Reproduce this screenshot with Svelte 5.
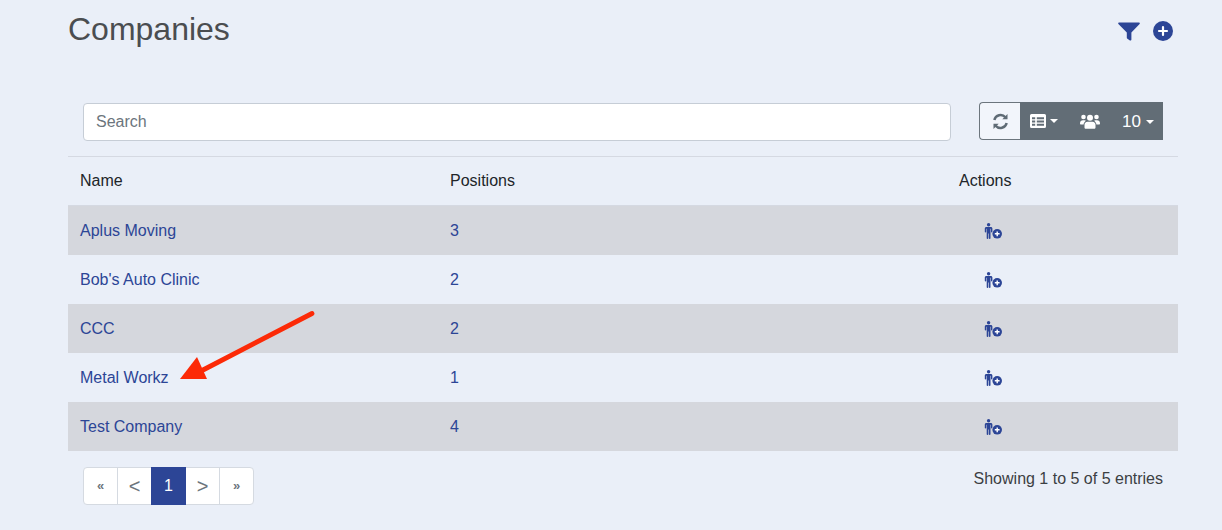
<script>
  const companies = [
    { name: "Aplus Moving", positions: 3 },
    { name: "Bob's Auto Clinic", positions: 2 },
    { name: "CCC", positions: 2 },
    { name: "Metal Workz", positions: 1 },
    { name: "Test Company", positions: 4 }
  ];
</script>

<main class="page">
  <header class="top">
    <h1>Companies</h1>
    <div class="top-icons">
      <svg class="filter" viewBox="0 0 22 19" width="22" height="19">
        <path d="M1 0.500h20c.8 0 1.100.9.600 1.500L13.400 10.500v7c0 .8-.8 1.300-1.500.9l-2.500-1.600c-.4-.2-.6-.6-.6-1v-5.300L.4 2C-.1 1.400.2.500 1 .500z" />
      </svg>
      <svg class="plus" viewBox="0 0 20 20" width="20" height="20">
        <circle cx="10" cy="10" r="10" />
        <path d="M10 6v8M6 10h8" />
      </svg>
    </div>
  </header>

  <div class="toolbar">
    <input class="search" placeholder="Search" />
    <div class="btn-group">
      <button class="btn light" aria-label="Refresh">
        <svg viewBox="0 0 16 16" width="17" height="17">
          <path d="M2.200 6.600A6 6 0 0 1 12.600 4M13.800 9.400A6 6 0 0 1 3.400 12" />
          <path class="solid" d="M14.600 1v4.900H9.700zM1.400 15v-4.900h4.900z" />
        </svg>
      </button>
      <button class="btn dark cols" aria-label="Columns">
        <svg viewBox="0 0 16 14" width="16" height="14">
          <path class="solid" fill-rule="evenodd" d="M1.500 0h13A1.500 1.500 0 0 1 16 1.500v11a1.500 1.500 0 0 1-1.500 1.500h-13A1.500 1.500 0 0 1 0 12.500v-11A1.500 1.500 0 0 1 1.500 0zM2 3.200v2h3.200v-2zM6.800 3.200v2H14v-2zM2 6.500v2h3.200v-2zM6.800 6.500v2H14v-2zM2 9.800v2h3.200v-2zM6.800 9.800v2H14v-2z" />
        </svg>
        <span class="caret"></span>
      </button>
      <button class="btn dark group" aria-label="Groups">
        <svg viewBox="0 0 20 15" width="20" height="15">
          <g class="solid">
            <circle cx="3.500" cy="3" r="2.300" />
            <circle cx="16.500" cy="3" r="2.300" />
            <circle cx="10" cy="3.700" r="3" />
            <path d="M0 9.500C0 7.500 1.200 6.300 3 6.300h1.600c.5 0 1 .2 1.300.5-1.300.9-2.100 2.200-2.300 3.700H1c-.6 0-1-.4-1-1zM20 9.500c0-2-1.200-3.200-3-3.200h-1.600c-.5 0-1 .2-1.300.5 1.300.9 2.100 2.200 2.300 3.700H19c.6 0 1-.4 1-1z" />
            <path d="M7.500 7.700h5c1.800 0 3 1.300 3 3.100v2.700c0 .8-.6 1.300-1.300 1.300H5.800c-.7 0-1.300-.5-1.300-1.300v-2.700c0-1.800 1.200-3.100 3-3.100z" />
          </g>
        </svg>
      </button>
      <button class="btn dark size">10<span class="caret"></span></button>
    </div>
  </div>

  <table>
    <thead>
      <tr>
        <th class="c-name">Name</th>
        <th class="c-pos">Positions</th>
        <th class="c-act">Actions</th>
      </tr>
    </thead>
    <tbody>
      {#each companies as c}
        <tr>
          <td><a href="#top">{c.name}</a></td>
          <td><a href="#top">{c.positions}</a></td>
          <td class="act">
            <svg viewBox="0 0 18 16" width="18" height="16">
              <circle cx="4.600" cy="1.700" r="1.700" />
              <path d="M2.400 3.900h4.400c.9 0 1.600.7 1.600 1.600v3.100c0 .4-.3.800-.7.800s-.7-.3-.7-.7V5.800h-.5v9.400c0 .5-.4.800-.8.800s-.8-.3-.8-.8v-4.700h-.6v4.700c0 .5-.4.800-.8.800s-.8-.3-.8-.8V5.800H2.200v3c0 .4-.3.700-.7.700s-.7-.4-.7-.8V5.500c0-.9.700-1.600 1.600-1.600z" />
              <circle cx="13.200" cy="10.800" r="4.800" />
              <path class="cross" d="M13.200 8.400v4.800M10.800 10.800h4.800" />
            </svg>
          </td>
        </tr>
      {/each}
    </tbody>
  </table>

  <footer class="bottom">
    <nav class="pager">
      <span class="pg first">«</span>
      <span class="pg prev">&lt;</span>
      <span class="pg active">1</span>
      <span class="pg next">&gt;</span>
      <span class="pg last">»</span>
    </nav>
    <span class="info">Showing 1 to 5 of 5 entries</span>
  </footer>

  <svg class="arrow" viewBox="0 0 140 74" width="140" height="74">
    <path d="M134 3.500L25 60" stroke="#fc2a07" stroke-width="4.800" stroke-linecap="round" fill="none" />
    <path d="M2 69L19 47L29 69z" fill="#fc2a07" />
  </svg>
</main>

<style>
  :global(body) {
    margin: 0;
    background: #eaeff8;
    font-family: "Liberation Sans", Arial, sans-serif;
    color: #212529;
  }
  .page {
    position: relative;
    width: 1110px;
    margin-left: 68px;
    height: 530px;
    overflow: hidden;
    font-size: 16px;
  }
  .top {
    display: flex;
    justify-content: space-between;
    height: 102px;
  }
  h1 {
    margin: 11px 0 0;
    font-size: 32px;
    line-height: 36px;
    font-weight: 400;
    color: #4a4d50;
  }
  .top-icons {
    display: flex;
    align-items: center;
    gap: 13px;
    height: 20px;
    margin-top: 21px;
    padding-right: 5px;
  }
  .filter { fill: #2c4596; }
  .plus circle { fill: #2c4596; }
  .plus path { stroke: #fff; stroke-width: 2.200; stroke-linecap: round; }

  .toolbar {
    display: flex;
    justify-content: space-between;
    align-items: flex-start;
    padding: 0 15px;
    height: 54px;
    border-bottom: 1px solid #d5d9e2;
  }
  .search {
    box-sizing: border-box;
    width: 868px;
    height: 38px;
    margin-top: 1px;
    padding: 0 12px;
    border: 1px solid #c6cdd6;
    border-radius: 4px;
    background: #fff;
    font: inherit;
    outline: none;
  }
  .search::placeholder { color: #6c757d; opacity: 1; }
  .btn-group { display: flex; height: 38px; }
  .btn {
    display: flex;
    align-items: center;
    justify-content: center;
    box-sizing: border-box;
    height: 38px;
    padding: 0;
    border: 0;
    font: inherit;
  }
  .light {
    width: 41px;
    background: #f2f5fb;
    border: 1px solid #6c757d;
    border-right: 0;
    border-radius: 4px 0 0 4px;
  }
  .light path { fill: none; stroke: #5f6b75; stroke-width: 2.300; }
  .light path.solid { fill: #5f6b75; stroke: none; }
  .dark { background: #626d76; color: #fff; }
  .solid { fill: #fff; }
  .cols { width: 50px; gap: 4px; padding-right: 3px; }
  .group { width: 40px; }
  .size { width: 53px; gap: 5px; font-size: 17px; padding: 1px 0 0 3px; }
  .caret {
    width: 0;
    height: 0;
    border-top: 4.500px solid #fff;
    border-left: 4.500px solid transparent;
    border-right: 4.500px solid transparent;
  }

  table {
    width: 1110px;
    border-collapse: separate;
    border-spacing: 0;
    table-layout: fixed;
  }
  th {
    box-sizing: border-box;
    height: 49px;
    padding: 0 12px 1px;
    text-align: left;
    font-weight: 400;
    border-bottom: 1px solid #d5d9e2;
  }
  th.c-name { width: 370px; }
  th.c-pos { width: 509px; }
  td {
    box-sizing: border-box;
    height: 49px;
    padding: 0 12px;
  }
  tbody tr:nth-child(odd) td { background: #d5d7dd; }
  a { color: #2c4596; text-decoration: none; }
  .act { padding-left: 37px; }
  .act svg { display: block; fill: #2c4596; }
  .act .cross { stroke: #fff; stroke-width: 1.400; fill: none; }

  .bottom {
    display: flex;
    justify-content: space-between;
    align-items: flex-start;
    padding: 16px 15px 0;
  }
  .pager {
    display: flex;
    box-sizing: border-box;
    height: 38px;
    background: #fff;
    border: 1px solid #d5dae1;
    border-radius: 4px;
    color: #6c757d;
  }
  .pg {
    display: flex;
    align-items: center;
    justify-content: center;
    box-sizing: border-box;
  }
  .first { width: 34px; border-right: 1px solid #d5dae1; font-size: 13px; font-weight: 700; padding-bottom: 1px; }
  .prev { width: 33px; font-size: 20px; }
  .active {
    width: 35px;
    margin: -1px 0;
    background: #2c4596;
    color: #fff;
  }
  .next { width: 34px; border-right: 1px solid #d5dae1; font-size: 20px; }
  .last { width: 33px; font-size: 13px; font-weight: 700; padding-bottom: 1px; }
  .info { margin-top: 3px; line-height: 18px; color: #3c4043; }

  .arrow {
    position: absolute;
    left: 110px;
    top: 310px;
  }
</style>
